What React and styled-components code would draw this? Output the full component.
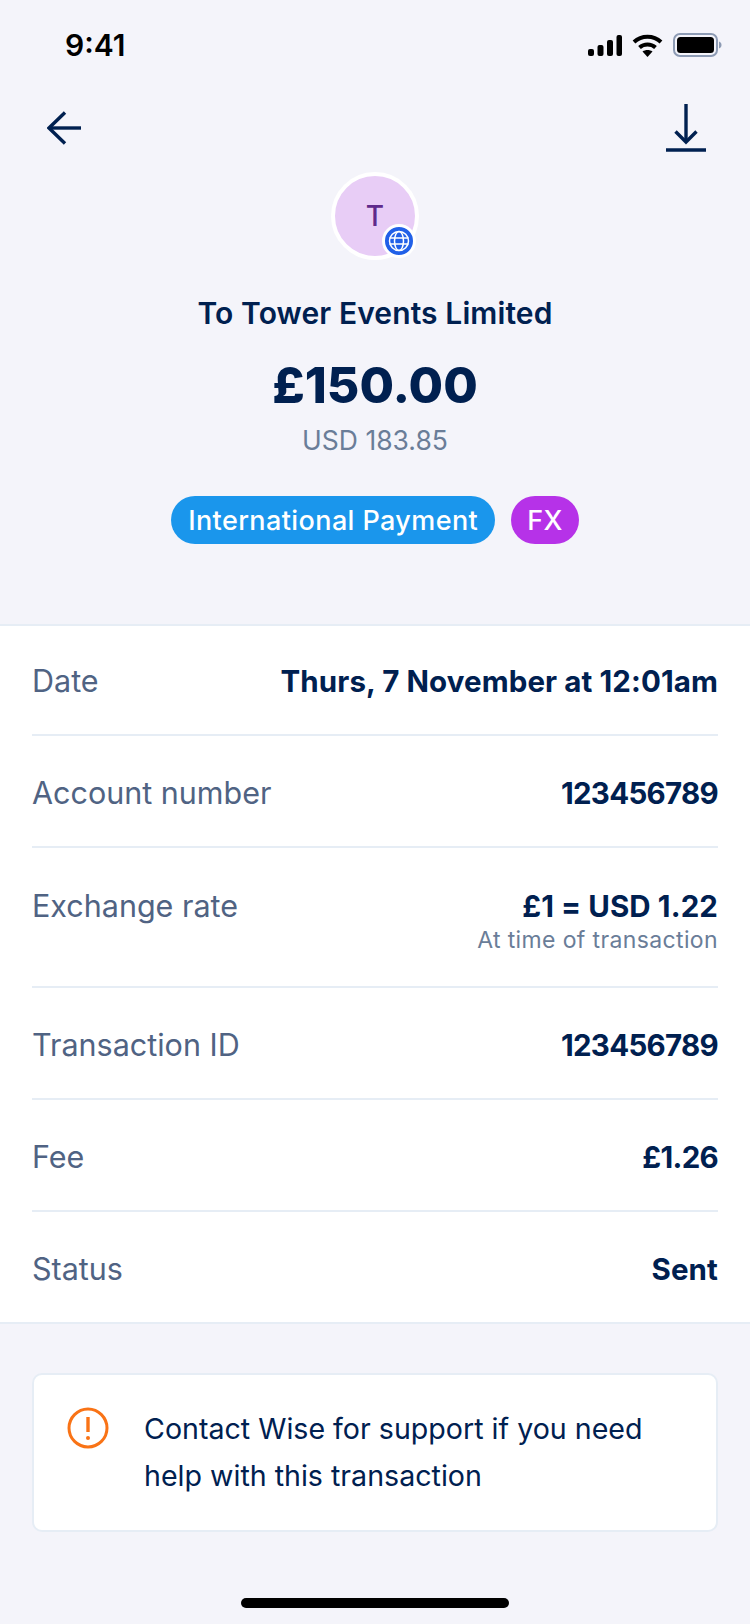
import React from "react";
import styled, { createGlobalStyle } from "styled-components";

const Global = createGlobalStyle`
  html, body { margin: 0; padding: 0; background: #f4f4fa; }
  body { font-family: "Inter", "Lato", "Liberation Sans", sans-serif; }
`;

const Page = styled.div`
  width: 750px;
  height: 1624px;
  background: #f4f4fa;
  color: #002050;
  display: flex;
  flex-direction: column;
  overflow: hidden;
`;

const StatusBar = styled.div`
  height: 90px;
  padding: 0 28px 0 65px;
  display: flex;
  align-items: center;
  justify-content: space-between;
  box-sizing: border-box;
`;

const Time = styled.span`
  font-family: "Inter", sans-serif;
  font-size: 30px;
  font-weight: 600;
  color: #000;
`;

const StatusIcons = styled.div`
  display: flex;
  align-items: center;
  gap: 10px;
`;

const Nav = styled.div`
  height: 76px;
  padding: 0 44px 0 47px;
  display: flex;
  align-items: center;
  justify-content: space-between;
`;

const Hero = styled.div`
  display: flex;
  flex-direction: column;
  align-items: center;
  padding-top: 6px;
`;

const AvatarRing = styled.div`
  position: relative;
  width: 88px;
  height: 88px;
  box-sizing: border-box;
  border: 4px solid #fff;
  border-radius: 50%;
  background: #e8cdf6;
  color: #5f2a8c;
  font-size: 28px;
  font-weight: 500;
  display: flex;
  align-items: center;
  justify-content: center;
`;

const GlobeBadge = styled.div`
  position: absolute;
  right: -1px;
  bottom: -2px;
  width: 28px;
  height: 28px;
  border: 3px solid #fff;
  border-radius: 50%;
  background: #2160e8;
  display: flex;
  align-items: center;
  justify-content: center;
`;

const Title = styled.div`
  margin-top: 31px;
  font-size: 30px;
  line-height: 44px;
  font-weight: 600;
  letter-spacing: 0.1px;
`;

const Amount = styled.div`
  margin-top: 19px;
  font-size: 50px;
  line-height: 62px;
  font-weight: 800;
`;

const Converted = styled.div`
  margin-top: 6px;
  font-size: 26.5px;
  line-height: 36px;
  color: #6a7d98;
`;

const Tags = styled.div`
  margin-top: 38px;
  display: flex;
  gap: 16px;
`;

const Tag = styled.span`
  height: 48px;
  padding: 0 ${(p) => (p.$compact ? "16px" : "17px")};
  border-radius: 24px;
  background: ${(p) => p.$bg};
  color: #fff;
  font-size: 27px;
  font-weight: 500;
  letter-spacing: 0.4px;
  display: flex;
  align-items: center;
`;

const Details = styled.section`
  margin-top: 80px;
  background: #fff;
  border-top: 2px solid #e6edf5;
  border-bottom: 2px solid #e6edf5;
  padding: 0 32px;
`;

const Row = styled.div`
  display: flex;
  justify-content: space-between;
  align-items: ${(p) => (p.$tall ? "flex-start" : "center")};
  box-sizing: border-box;
  height: 112px;
  padding-top: 3px;
  border-bottom: 2px solid #e6edf5;
  ${(p) => p.$tall && "height: 140px; padding-top: 38px;"}
  &:first-child { height: 110px; padding-top: 2px; }
  &:last-child { height: 110px; padding-top: 4px; border-bottom: none; }
`;

const Label = styled.span`
  font-size: 30.5px;
  line-height: 40px;
  color: #506383;
`;

const ValueGroup = styled.div`
  display: flex;
  flex-direction: column;
  align-items: flex-end;
`;

const Value = styled.span`
  font-size: 29.5px;
  line-height: 40px;
  font-weight: 650;
  color: #002050;
  letter-spacing: ${(p) => (p.$tight ? "-0.7px" : "0.1px")};
`;

const Note = styled.span`
  font-size: 23px;
  line-height: 28px;
  letter-spacing: 0.37px;
  color: #6a7d98;
`;

const Notice = styled.div`
  margin: 49px 32px 0;
  height: 159px;
  box-sizing: border-box;
  background: #fff;
  border: 2px solid #e6edf5;
  border-radius: 10px;
  display: flex;
  align-items: flex-start;
  padding: 30px 32px 0 33px;
  gap: 35px;
`;

const AlertIcon = styled.svg`
  flex: none;
  margin-top: 2px;
`;

const NoticeText = styled.p`
  margin: 0;
  font-size: 28.6px;
  line-height: 47px;
  color: #002050;
`;

const HomeBar = styled.div`
  margin: 66px auto 0;
  width: 268px;
  height: 10px;
  border-radius: 5px;
  background: #000;
`;

export default function App() {
  return (
    <Page>
      <Global />
      <StatusBar>
        <Time>9:41</Time>
        <StatusIcons>
          <svg width="34" height="21" viewBox="0 0 34 21" fill="#000">
            <rect x="0" y="14" width="6" height="7" rx="2" />
            <rect x="9.5" y="10" width="6" height="11" rx="2" />
            <rect x="19" y="5" width="6" height="16" rx="2" />
            <rect x="28.5" y="0" width="5.5" height="21" rx="2" />
          </svg>
          <svg width="31" height="23" viewBox="0 0 31 23" fill="none" stroke="#000" strokeWidth="4">
            <path d="M2 8 C9.5 1 21.5 1 29 8" />
            <path d="M7.5 13.5 C12 9.5 19 9.5 23.5 13.5" />
            <path d="M15.5 23 L10.5 17.5 C13.5 15.5 17.5 15.5 20.5 17.5 Z" fill="#000" stroke="none" />
          </svg>
          <svg width="49" height="24" viewBox="0 0 49 24">
            <rect x="1" y="1" width="43" height="22" rx="6" fill="none" stroke="#8d9bb4" strokeWidth="2" />
            <rect x="4" y="4" width="37" height="16" rx="3.5" fill="#000" />
            <path d="M46 8.5 C48 9.5 48.5 10.5 48.5 12 C48.5 13.5 48 14.5 46 15.5 Z" fill="#8d9bb4" />
          </svg>
        </StatusIcons>
      </StatusBar>
      <Nav>
        <svg width="34" height="34" viewBox="0 0 34 34" fill="none" stroke="#002050" strokeWidth="3.4">
          <path d="M18 1.5 L2 17 L18 32.5" />
          <path d="M2 17 H34" />
        </svg>
        <svg width="40" height="48" viewBox="0 0 40 48" fill="none" stroke="#002050" strokeWidth="3.4">
          <path d="M20 0 V38" />
          <path d="M9.5 27.5 L20 38 L30.5 27.5" />
          <path d="M0 46 H40" strokeWidth="3.6" />
        </svg>
      </Nav>
      <Hero>
        <AvatarRing>
          T
          <GlobeBadge>
            <svg width="22" height="22" viewBox="0 0 22 22" fill="none" stroke="#fff" strokeWidth="1.5">
              <circle cx="11" cy="11" r="9.5" />
              <ellipse cx="11" cy="11" rx="4.5" ry="9.5" />
              <path d="M1.5 8 H20.5 M1.5 14 H20.5" />
            </svg>
          </GlobeBadge>
        </AvatarRing>
        <Title>To Tower Events Limited</Title>
        <Amount>£150.00</Amount>
        <Converted>USD 183.85</Converted>
        <Tags>
          <Tag $bg="#1a96ec">International Payment</Tag>
          <Tag $bg="#b632e8" $compact>FX</Tag>
        </Tags>
      </Hero>
      <Details>
        <Row><Label>Date</Label><Value>Thurs, 7 November at 12:01am</Value></Row>
        <Row><Label>Account number</Label><Value $tight>123456789</Value></Row>
        <Row $tall>
          <Label>Exchange rate</Label>
          <ValueGroup>
            <Value>£1 = USD 1.22</Value>
            <Note>At time of transaction</Note>
          </ValueGroup>
        </Row>
        <Row><Label>Transaction ID</Label><Value $tight>123456789</Value></Row>
        <Row><Label>Fee</Label><Value $tight>£1.26</Value></Row>
        <Row><Label>Status</Label><Value>Sent</Value></Row>
      </Details>
      <Notice>
        <AlertIcon width="42" height="42" viewBox="0 0 42 42" fill="none" stroke="#f97316" strokeWidth="3">
          <circle cx="21" cy="21" r="19" />
          <path d="M21 10 V25" strokeWidth="3.4" />
          <circle cx="21" cy="31" r="2" fill="#f97316" stroke="none" />
        </AlertIcon>
        <NoticeText>Contact Wise for support if you need<br />help with this transaction</NoticeText>
      </Notice>
      <HomeBar />
    </Page>
  );
}
